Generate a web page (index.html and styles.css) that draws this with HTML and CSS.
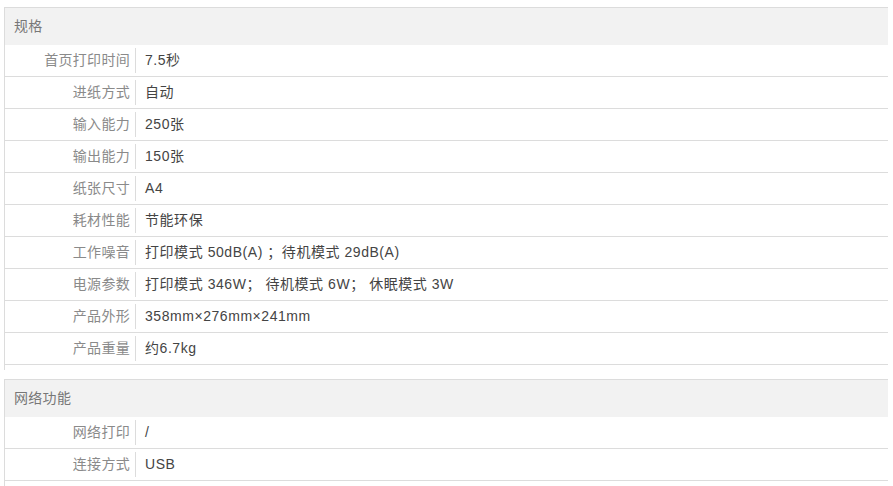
FILE: index.html
```html
<!DOCTYPE html>
<html lang="zh-CN">
<head>
<meta charset="utf-8">
<title>规格</title>
<link rel="stylesheet" href="styles.css">
</head>
<body>
<div class="page">
  <section class="spec">
    <div class="spec-title">规格</div>
    <div class="row"><div class="label">首页打印时间</div><div class="value">7.5秒</div></div>
    <div class="row"><div class="label">进纸方式</div><div class="value">自动</div></div>
    <div class="row"><div class="label">输入能力</div><div class="value">250张</div></div>
    <div class="row"><div class="label">输出能力</div><div class="value">150张</div></div>
    <div class="row"><div class="label">纸张尺寸</div><div class="value">A4</div></div>
    <div class="row"><div class="label">耗材性能</div><div class="value">节能环保</div></div>
    <div class="row"><div class="label">工作噪音</div><div class="value">打印模式 50dB(A) ；待机模式 29dB(A)</div></div>
    <div class="row"><div class="label">电源参数</div><div class="value">打印模式 346W； 待机模式 6W； 休眠模式 3W</div></div>
    <div class="row"><div class="label">产品外形</div><div class="value">358mm×276mm×241mm</div></div>
    <div class="row"><div class="label">产品重量</div><div class="value">约6.7kg</div></div>
  </section>
  <section class="spec">
    <div class="spec-title">网络功能</div>
    <div class="row"><div class="label">网络打印</div><div class="value">/</div></div>
    <div class="row"><div class="label">连接方式</div><div class="value">USB</div></div>
  </section>
</div>
</body>
</html>
```
FILE: styles.css
```css
html, body {
  margin: 0;
  padding: 0;
  background: #fff;
}
body {
  font-family: "Liberation Sans", "Noto Sans CJK SC", sans-serif;
  font-size: 14px;
}
.page {
  padding: 7px 5px 0 4px;
  display: flex;
  flex-direction: column;
  gap: 9px;
}
.spec {
  border-top: 1px solid #dcdcdc;
  border-left: 1px solid #dcdcdc;
  padding-bottom: 5px;
}
.spec-title {
  height: 37px;
  line-height: 37px;
  background: #f2f2f2;
  color: #777;
  padding-left: 9px;
  letter-spacing: 0.3px;
}
.row {
  display: flex;
  align-items: center;
  height: 31px;
  border-bottom: 1px solid #dcdcdc;
}
.label {
  width: 125px;
  padding-right: 5px;
  text-align: right;
  color: #8a8a8a;
  border-right: 1px solid #dcdcdc;
  height: 25px;
  line-height: 25px;
  flex: none;
  letter-spacing: 0.3px;
}
.value {
  padding-left: 9px;
  color: #444;
  line-height: 25px;
  letter-spacing: 0.55px;
}
```
